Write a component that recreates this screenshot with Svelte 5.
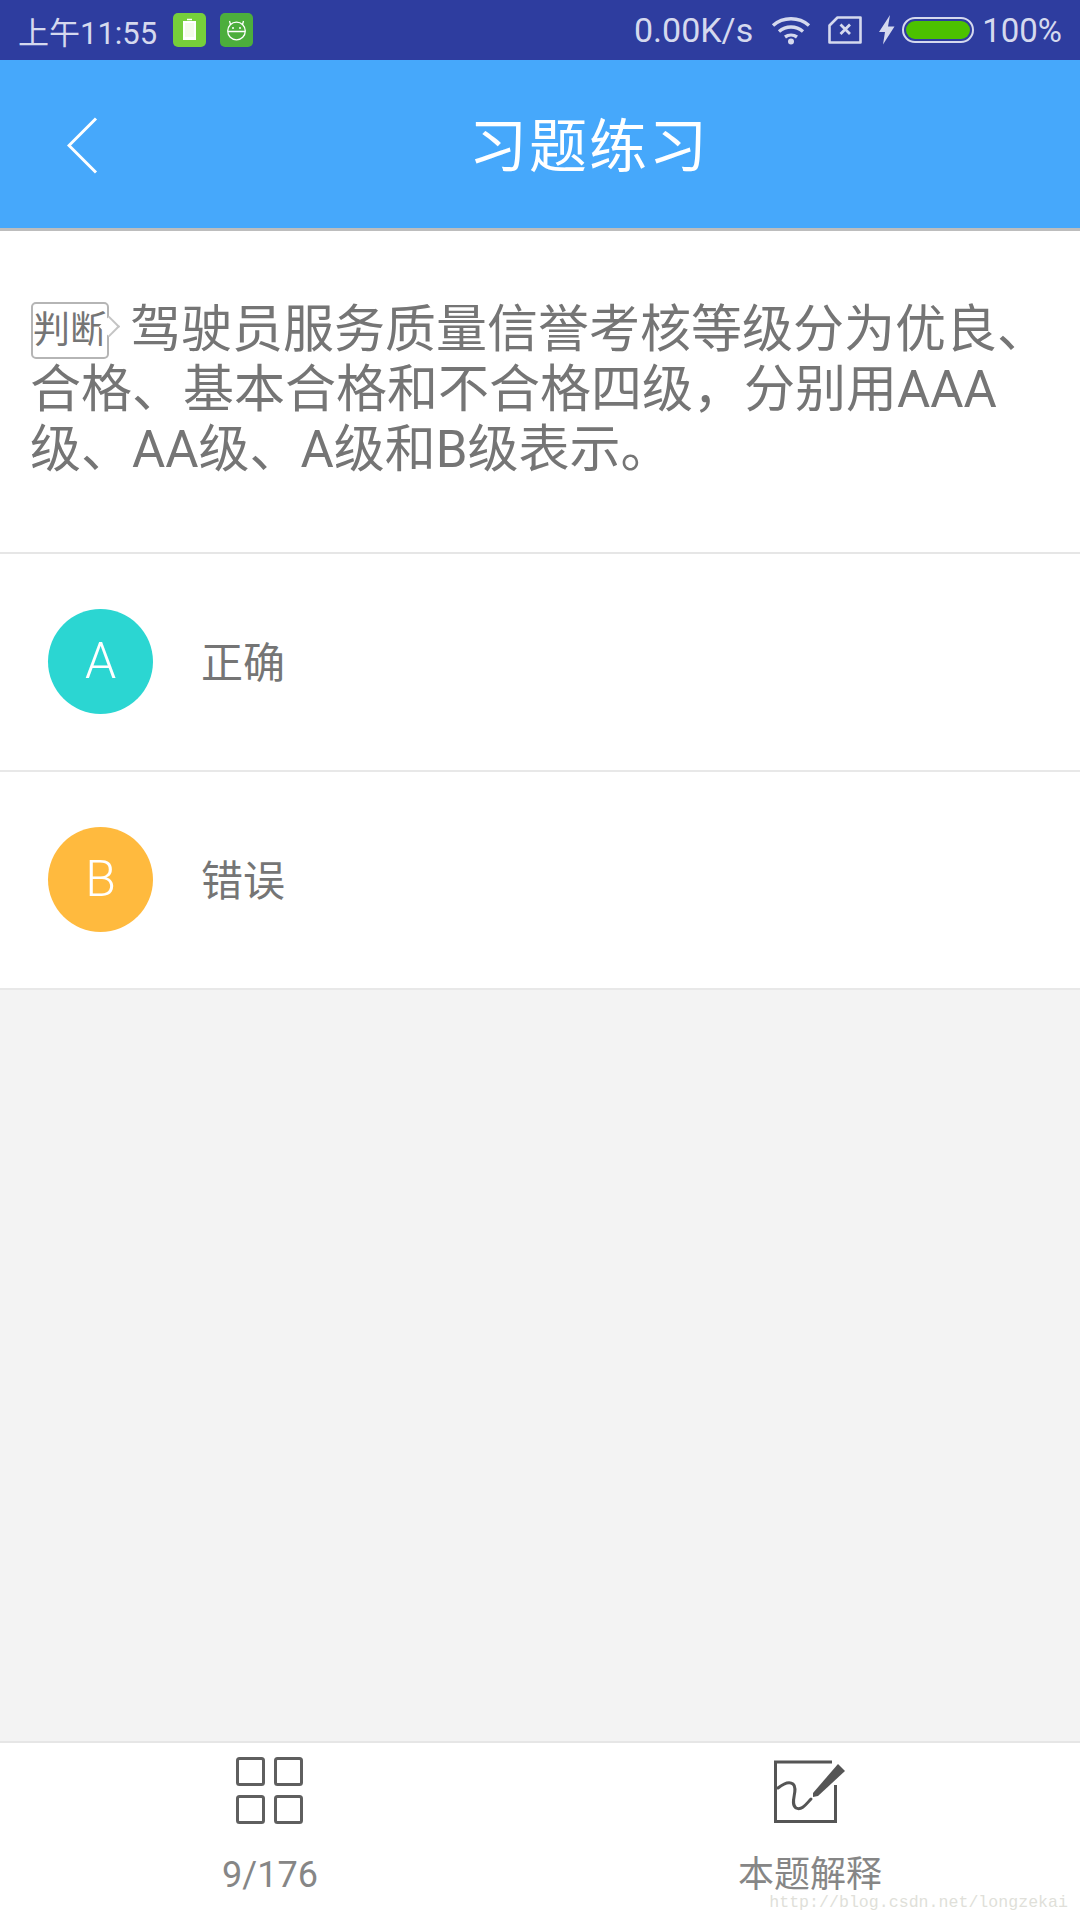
<script lang="ts">
  const options = [
    { key: 'A', label: '正确', tone: 'teal' },
    { key: 'B', label: '错误', tone: 'amber' }
  ];
</script>

<div class="screen">
  <div class="status-bar">
    <div class="status-left">
      <span class="time">上午11:55</span>
      <svg class="app-icon" viewBox="0 0 34 34" aria-hidden="true">
        <rect width="33" height="34" rx="5" fill="#76cf3b" />
        <path d="M14 6.5h5" stroke="#fff" stroke-width="1.5" />
        <rect x="10.5" y="8.5" width="12" height="18" fill="#fff" stroke="#fff" />
        <rect x="12" y="10" width="9" height="14" fill="#f4fbe9" />
      </svg>
      <svg class="app-icon" viewBox="0 0 34 34" aria-hidden="true">
        <rect width="33" height="34" rx="5" fill="#4cae3c" />
        <g fill="none" stroke="#fff" stroke-width="1.3">
          <circle cx="16.5" cy="18" r="8.8" />
          <path d="M8 18.5h17M10.5 11.5 9.5 8M22.5 11.5 23.5 8" />
        </g>
        <circle cx="13" cy="15" r="1" fill="#fff" />
        <circle cx="20" cy="15" r="1" fill="#fff" />
      </svg>
    </div>
    <div class="status-right">
      <span class="speed">0.00K/s</span>
      <svg class="wifi" viewBox="0 0 40 30" aria-hidden="true">
        <g fill="none" stroke="#d5d9ee" stroke-width="3.4">
          <path d="M2 10.5C12 1.5 28 1.5 38 10.5" />
          <path d="M8 16.5C15 10.5 25 10.5 32 16.5" />
          <path d="M14 22C17.500 19.500 22.500 19.500 26 22" />
        </g>
        <circle cx="20" cy="26.500" r="3" fill="#d5d9ee" />
      </svg>
      <svg class="sim" viewBox="0 0 34 28" aria-hidden="true">
        <path d="M1.500 9.500 9.500 1.500H32.500V26.500H1.500Z" fill="none" stroke="#d5d9ee" stroke-width="2.600" stroke-linejoin="round" />
        <path d="M12.500 8.500 22 18M22 8.500 12.500 18" stroke="#d5d9ee" stroke-width="2.800" />
      </svg>
      <svg class="bolt" viewBox="0 0 17 30" aria-hidden="true">
        <path d="M12 0 1 17H7L5 29.500 16.500 11.500H10Z" fill="#d5d9ee" />
      </svg>
      <span class="battery"><span class="battery-fill"></span></span>
      <span class="percent">100%</span>
    </div>
  </div>

  <header class="app-bar">
    <svg class="back" viewBox="0 0 32 58" aria-hidden="true">
      <path d="M29 1.500 2 28.500 29 55.500" fill="none" stroke="#fff" stroke-width="3" />
    </svg>
    <h1>习题练习</h1>
  </header>

  <section class="question">
    <p><span class="tag">判断</span>驾驶员服务质量信誉考核等级分为优良、<br />合格、基本合格和不合格四级，分别用AAA<br />级、AA级、A级和B级表示。</p>
  </section>

  <ul class="options">
    {#each options as option}
      <li>
        <span class="badge {option.tone}">{option.key}</span>
        <span class="label">{option.label}</span>
      </li>
    {/each}
  </ul>

  <div class="filler"></div>

  <footer class="tabs">
    <div class="tab">
      <svg class="grid-icon" viewBox="0 0 68 68" aria-hidden="true">
        <g fill="none" stroke="#5f5f5f" stroke-width="3">
          <rect x="1.500" y="1.500" width="26" height="26" rx="2" />
          <rect x="39.500" y="1.500" width="26" height="26" rx="2" />
          <rect x="1.500" y="39.500" width="26" height="26" rx="2" />
          <rect x="39.500" y="39.500" width="26" height="26" rx="2" />
        </g>
      </svg>
      <span>9/176</span>
    </div>
    <div class="tab">
      <svg class="pen-icon" viewBox="0 0 72 63" aria-hidden="true">
        <path d="M58 2H1.500V61.500H61.500V25" fill="none" stroke="#555" stroke-width="3" />
        <path d="M4 28C9 24 15 21 19 24 25 29 15 43 22 48 28 51 33 43 37 39" fill="none" stroke="#555" stroke-width="3" stroke-linecap="round" />
        <path d="M39 33 64 4 71 11 44 36 39 37Z" fill="#555" />
      </svg>
      <span>本题解释</span>
    </div>
    <span class="watermark">http://blog.csdn.net/longzekai</span>
  </footer>
</div>

<style>
  :global(body) {
    margin: 0;
  }
  .screen {
    width: 1080px;
    height: 1920px;
    display: flex;
    flex-direction: column;
    background: #f3f3f3;
    font-family: Roboto, 'Noto Sans CJK SC', sans-serif;
    overflow: hidden;
  }
  .status-bar {
    height: 60px;
    flex: none;
    display: flex;
    align-items: center;
    justify-content: space-between;
    padding: 0 18px;
    background: #2e3d9f;
    color: #d5d9ee;
    font-size: 33px;
  }
  .status-left,
  .status-right {
    display: flex;
    align-items: center;
  }
  .time {
    margin-right: 16px;
    font-size: 31px;
  }
  .app-icon {
    width: 34px;
    height: 34px;
    margin-right: 13px;
  }
  .speed {
    margin-right: 18px;
    font-size: 34px;
  }
  .wifi {
    width: 40px;
    height: 30px;
    margin-right: 17px;
  }
  .sim {
    width: 34px;
    height: 28px;
    margin-right: 16px;
  }
  .bolt {
    width: 17px;
    height: 30px;
    margin-right: 7px;
  }
  .battery {
    width: 72px;
    height: 26px;
    box-sizing: border-box;
    border: 2px solid #d5d9ee;
    border-radius: 13px;
    padding: 2px;
    margin-right: 8px;
  }
  .battery-fill {
    display: block;
    height: 100%;
    border-radius: 9px;
    background: #4cc200;
  }
  .app-bar {
    position: relative;
    height: 168px;
    flex: none;
    display: flex;
    align-items: center;
    justify-content: center;
    background: #46a8fb;
    border-bottom: 3px solid #bdbdbd;
  }
  .back {
    position: absolute;
    left: 67px;
    top: 57px;
    width: 32px;
    height: 58px;
  }
  h1 {
    margin: 0 0 4px 98px;
    color: #fff;
    font-size: 58px;
    font-weight: 400;
    letter-spacing: 2px;
  }
  .question {
    height: 323px;
    flex: none;
    box-sizing: border-box;
    padding: 69px 0 0 30px;
    background: #fff;
    border-bottom: 2px solid #e6e6e6;
  }
  .question p {
    margin: 0;
    color: #757575;
    font-size: 51px;
    line-height: 60px;
    white-space: nowrap;
  }
  .tag {
    position: relative;
    display: inline-block;
    box-sizing: border-box;
    width: 78px;
    height: 57px;
    margin: 0 21px 0 1px;
    border: 2px solid #b5b5b5;
    border-radius: 5px;
    font-size: 37px;
    line-height: 53px;
    text-align: center;
    vertical-align: 4px;
    white-space: nowrap;
  }
  .tag::after {
    content: '';
    position: absolute;
    right: -10px;
    top: 15px;
    width: 15px;
    height: 15px;
    box-sizing: border-box;
    background: #fff;
    border-top: 2px solid #c4c4c4;
    border-right: 2px solid #c4c4c4;
    transform: rotate(45deg);
  }
  .options {
    flex: none;
    margin: 0;
    padding: 0;
    list-style: none;
  }
  .options li {
    height: 218px;
    box-sizing: border-box;
    display: flex;
    align-items: center;
    padding-left: 48px;
    background: #fff;
    border-bottom: 2px solid #e8e8e8;
  }
  .badge {
    width: 105px;
    height: 105px;
    flex: none;
    display: flex;
    align-items: center;
    justify-content: center;
    margin-bottom: 2px;
    border-radius: 50%;
    color: #fff;
    font-size: 50px;
    font-weight: 300;
  }
  .teal {
    background: #2bd6d2;
  }
  .amber {
    background: #ffba3e;
  }
  .label {
    margin: 0 0 5px 48px;
    color: #757575;
    font-size: 42px;
  }
  .filler {
    flex: 1;
  }
  .tabs {
    position: relative;
    height: 179px;
    flex: none;
    box-sizing: border-box;
    display: grid;
    grid-template-columns: 1fr 1fr;
    background: #fff;
    border-top: 2px solid #e6e6e6;
  }
  .tab {
    display: flex;
    flex-direction: column;
    align-items: center;
    color: #868686;
    font-size: 36px;
  }
  .grid-icon {
    width: 68px;
    height: 68px;
    margin: 14px 0 26px;
  }
  .pen-icon {
    width: 72px;
    height: 63px;
    margin: 17px 0 28px;
  }
  .tab span {
    line-height: 48px;
  }
  .watermark {
    position: absolute;
    right: 12px;
    bottom: 8px;
    color: #e0dfd9;
    font-family: 'Liberation Mono', monospace;
    font-size: 16.6px;
  }
</style>
